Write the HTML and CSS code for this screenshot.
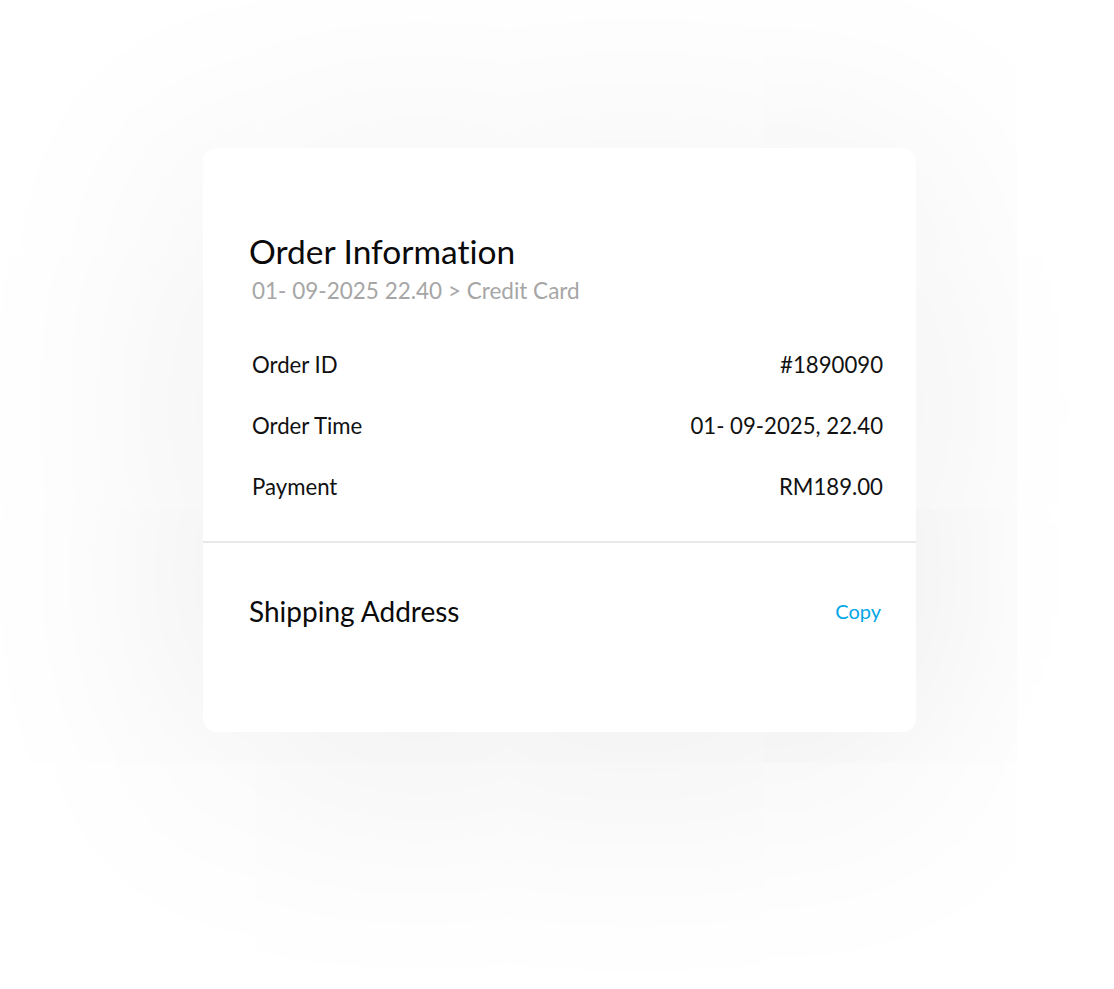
FILE: index.html
```html
<!DOCTYPE html>
<html>
<head>
<meta charset="utf-8">
<link rel="stylesheet" href="styles.css">
</head>
<body>
<div class="page">
  <div class="card">
    <section class="info">
      <h1 class="title">Order Information</h1>
      <div class="subtitle">01- 09-2025 22.40 &gt; Credit Card</div>
      <div class="rows">
        <div class="row"><span>Order ID</span><span>#1890090</span></div>
        <div class="row"><span>Order Time</span><span>01- 09-2025, 22.40</span></div>
        <div class="row"><span>Payment</span><span>RM189.00</span></div>
      </div>
    </section>
    <section class="shipping">
      <h2 class="ship-title">Shipping Address</h2>
      <a class="copy">Copy</a>
    </section>
  </div>
</div>
</body>
</html>
```
FILE: styles.css
```css
html, body {
  margin: 0;
  padding: 0;
  background: #ffffff;
}
body {
  font-family: "Lato", "Open Sans", sans-serif;
  font-variant-ligatures: none;
  color: #111;
}
.page {
  width: 1114px;
  height: 989px;
  padding: 148px 0 0 203px;
  box-sizing: border-box;
}
.card {
  width: 713px;
  height: 584px;
  background: #fff;
  border-radius: 14px;
  box-shadow: 0 30px 250px rgba(0, 0, 0, 0.095);
  display: flex;
  flex-direction: column;
}
.info {
  padding: 83px 33px 0 46px;
  height: 395px;
  box-sizing: border-box;
  border-bottom: 2px solid #e8e8e8;
}
.title {
  margin: 0;
  font-weight: 400;
  font-size: 33.5px;
  line-height: 40px;
  color: #0a0a0a;
}
.subtitle {
  margin: 4px 0 0 3px;
  font-size: 22.5px;
  line-height: 32px;
  color: #a6a6a6;
}
.rows {
  margin-top: 43px;
  padding-left: 3px;
  display: flex;
  flex-direction: column;
  gap: 31px;
}
.row {
  display: flex;
  justify-content: space-between;
  font-size: 22.2px;
  line-height: 30px;
  color: #111;
}
.shipping {
  display: flex;
  justify-content: space-between;
  align-items: center;
  padding: 50px 35px 0 46px;
}
.ship-title {
  margin: 0;
  font-weight: 400;
  font-size: 28px;
  line-height: 36px;
  color: #0a0a0a;
}
.copy {
  font-size: 20px;
  color: #00a6e6;
}
```
